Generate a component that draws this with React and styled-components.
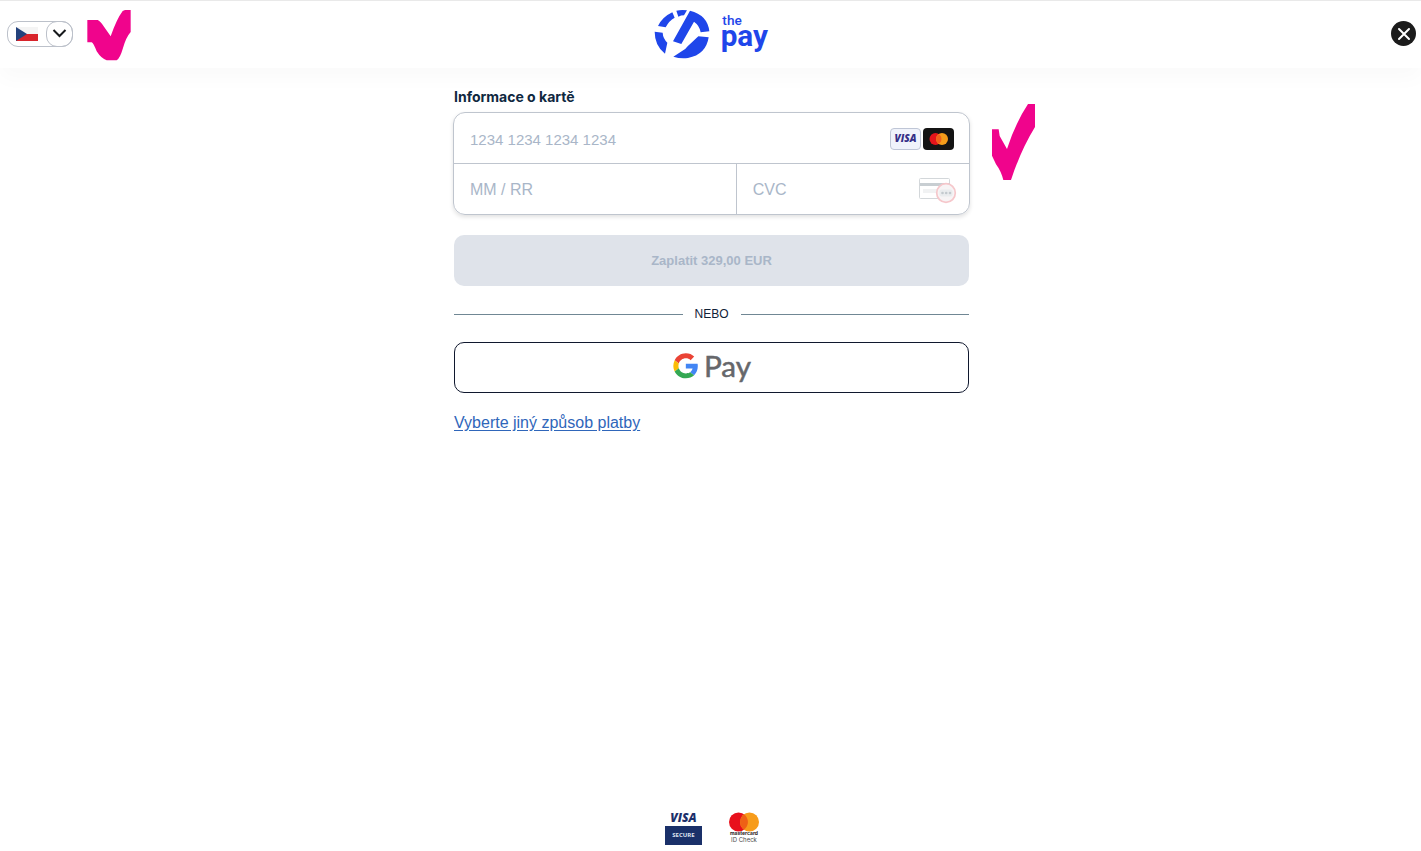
import React from "react";
import styled, { createGlobalStyle } from "styled-components";

const GlobalStyle = createGlobalStyle`
  *, *::before, *::after { box-sizing: border-box; }
  body {
    margin: 0;
    background: #ffffff;
    color: #0f2137;
    font-family: "Liberation Sans", Arial, sans-serif;
  }
  svg { display: block; flex: none; overflow: visible; }
`;

const Page = styled.div`
  min-height: 100vh;
  display: flex;
  flex-direction: column;
`;

const Header = styled.header`
  display: grid;
  grid-template-columns: 1fr auto 1fr;
  align-items: center;
  height: 68px;
  padding: 0 5px 2px 7px;
  border-top: 1px solid #e9e9e9;
  box-shadow: 0 10px 20px rgba(0, 0, 0, 0.025);
`;

const HeaderStart = styled.div`
  display: flex;
  align-items: center;
  gap: 14px;
`;

const LanguagePicker = styled.label`
  position: relative;
  display: flex;
  align-items: center;
  justify-content: space-between;
  width: 66px;
  height: 26px;
  padding-left: 8px;
  border: 1px solid #bcc1ca;
  border-radius: 11px;
`;

const ChevronBox = styled.span`
  display: flex;
  align-items: center;
  justify-content: center;
  width: 27px;
  height: 26px;
  margin: -1px;
  border: 1px solid #bcc1ca;
  border-radius: 11px;
`;

const LanguageSelect = styled.select`
  position: absolute;
  inset: 0;
  width: 100%;
  opacity: 0;
  cursor: pointer;
`;

const CloseButton = styled.button`
  justify-self: end;
  display: flex;
  align-items: center;
  justify-content: center;
  width: 25px;
  height: 25px;
  padding: 0;
  border: 0;
  border-radius: 50%;
  background: #1b1b1b;
  cursor: pointer;
`;

const Main = styled.main`
  flex: 1;
  display: flex;
  justify-content: center;
  padding: 19px 16px 20px 18px;
`;

const PaymentForm = styled.form`
  width: 100%;
  max-width: 515px;
`;

const FormLabel = styled.label`
  display: block;
  margin-bottom: 5px;
  font-family: Inter, sans-serif;
  font-size: 14px;
  font-weight: 700;
  line-height: 20px;
  color: #0f2840;
`;

const CardFields = styled.div`
  position: relative;
  margin: 0 -1px 20px;
  border: 1px solid #bfc5ce;
  border-radius: 12px;
  box-shadow: 0 2px 4px rgba(0, 0, 0, 0.12);
`;

const FieldRow = styled.div`
  display: flex;
  & + & { border-top: 1px solid #bfc5ce; }
`;

const Field = styled.div`
  flex: ${(p) => p.$share} 1 0;
  min-width: 0;
  display: flex;
  align-items: center;
  height: 50px;
  padding: 2px ${(p) => p.$end}px 0 16px;
  & + & { border-left: 1px solid #bfc5ce; }
`;

const FieldInput = styled.input`
  flex: 1;
  min-width: 0;
  height: 100%;
  padding: 0;
  border: 0;
  outline: 0;
  background: transparent;
  font-family: inherit;
  font-size: ${(p) => p.$size}px;
  color: #0f2137;
  &::placeholder { color: #a9b6c8; opacity: 1; }
`;

const Brands = styled.div`
  display: flex;
  gap: 2px;
`;

const CheckNote = styled.div`
  position: absolute;
  left: calc(100% + 23px);
  top: -9px;
`;

const ActionButton = styled.button`
  display: flex;
  align-items: center;
  justify-content: center;
  width: 100%;
  height: 51px;
  border-radius: 10px;
  font-family: inherit;
  font-size: 13px;
  font-weight: 700;
`;

const PayButton = styled(ActionButton)`
  border: 0;
  background: #dfe3ea;
  color: #a9b6c8;
`;

const GooglePayButton = styled(ActionButton)`
  border: 1px solid #10182e;
  background: #ffffff;
  cursor: pointer;
`;

const Divider = styled.div`
  display: flex;
  align-items: center;
  gap: 12px;
  margin: 20px 0;
  font-size: 12px;
  line-height: 16px;
  &::before, &::after {
    content: "";
    flex: 1;
    height: 1px;
    background: #708794;
  }
`;

const OtherMethodLink = styled.a`
  display: inline-block;
  margin-top: 20px;
  font-size: 16px;
  line-height: 20px;
  color: #2f66ba;
  text-decoration: underline;
  text-underline-offset: 2px;
`;

const Footer = styled.footer`
  display: flex;
  justify-content: center;
  gap: 27px;
  padding: 0 0 6px 3px;
`;

function FlagIcon() {
  return (
    <svg width="22" height="14" viewBox="0 0 22 14" aria-hidden="true">
      <path fill="#f4f4f4" d="M0 0h22v7H0z" />
      <path fill="#d8242b" d="M0 7h22v7H0z" />
      <path fill="#24427c" d="M0 0l11 7-11 7z" />
    </svg>
  );
}

function ThePayLogo() {
  return (
    <svg width="115" height="50" viewBox="42 27 345 150" role="img" aria-label="ThePay">
      <g fill="#1f46ea">
        <path d="M54 78Q67 51 97 37L104 53Q87 62 77 82Z" />
        <path d="M44 95L68 98Q69 115 82 128L75 161Q44 137 44 95Z" />
        <path d="M109 32Q125 28 141 31L132 46Q123 46 115 50Z" />
        <path d="M150 32Q203 45 208 94L182 97Q179 77 162 65L124 132L99 124Z" />
        <path d="M206 112Q198 164 144 174Q121 177 100 170L125 154Q137 148 143 139L175 109Z" />
      </g>
      <g fill="#1f46ea" fontFamily="Roboto, sans-serif">
        <text x="247" y="76" fontSize="41" fontWeight="500">the</text>
        <text x="242" y="139" fontSize="89" fontWeight="700">pay</text>
      </g>
    </svg>
  );
}

function SmallCheck() {
  return (
    <svg width="44" height="55" viewBox="261 19 132 165" aria-hidden="true">
      <path fill="#f0048c" d="M262 61H293Q300 63 311 80L332 110Q350 58 368 34L375 31H392V97Q378 113 369 145Q360 176 350 182H320Q304 177 290 155Q280 130 275 128H262Z" />
    </svg>
  );
}

function LargeCheck() {
  return (
    <svg width="44" height="76" viewBox="366 41 132 228" aria-hidden="true">
      <path fill="#f0048c" d="M366 117H386L389 137L411 176Q436 98 474 41H495V110Q452 180 423 269H400Q393 242 378 222L366 196Z" />
    </svg>
  );
}

function VisaBadge() {
  return (
    <svg width="31" height="22" viewBox="0 0 31 22" role="img" aria-label="Visa">
      <rect x="0.5" y="0.5" width="30" height="21" rx="3.5" fill="#f0f3fb" stroke="#bfc6d6" />
      <text x="15.5" y="14" textAnchor="middle" fontFamily="Open Sans, sans-serif" fontSize="10" fontStyle="italic" fontWeight="800" fill="#352f87">VISA</text>
    </svg>
  );
}

function MastercardBadge() {
  return (
    <svg width="31" height="22" viewBox="0 0 31 22" role="img" aria-label="Mastercard">
      <rect width="31" height="22" rx="4" fill="#141414" />
      <circle cx="12.5" cy="11" r="6" fill="#e5141b" />
      <circle cx="19" cy="11" r="6" fill="#f59c1a" />
      <path d="M15.75 6a6 6 0 0 1 0 10a6 6 0 0 1 0-10z" fill="#f1601c" />
    </svg>
  );
}

function CvcIcon() {
  return (
    <svg width="38" height="27" viewBox="0 0 38 27" aria-hidden="true">
      <rect x="0.5" y="1.5" width="30" height="20" rx="1" fill="#fff" stroke="#d3d7da" />
      <path fill="#c8ced2" d="M1 6h30v3H1z" />
      <path fill="#f1f2f3" d="M4 12h17v4H4z" />
      <circle cx="27" cy="16" r="9.3" fill="#f7f4f5" stroke="#f6c7cb" strokeWidth="1.7" />
      <rect x="20.5" y="12.5" width="13" height="7" rx="2" fill="#eaecee" />
      <g fill="#c3c9ce">
        <circle cx="23.5" cy="16" r="1.3" />
        <circle cx="27.2" cy="16" r="1.3" />
        <circle cx="31" cy="16" r="1.3" />
      </g>
    </svg>
  );
}

function GooglePayLogo() {
  return (
    <svg width="78" height="32" viewBox="98 366 234 96" role="img" aria-label="Google Pay">
      <svg x="99" y="369" width="75" height="77" viewBox="0 0 48 48">
        <path fill="#EA4335" d="M24 9.5c3.54 0 6.71 1.22 9.21 3.6l6.85-6.85C35.9 2.38 30.47 0 24 0 14.62 0 6.51 5.38 2.56 13.22l7.98 6.19C12.43 13.72 17.74 9.5 24 9.5z" />
        <path fill="#4285F4" d="M46.98 24.55c0-1.57-.15-3.09-.38-4.55H24v9.02h12.94c-.58 2.96-2.26 5.48-4.78 7.18l7.73 6c4.51-4.18 7.09-10.36 7.09-17.65z" />
        <path fill="#FBBC05" d="M10.53 28.59c-.48-1.45-.76-2.99-.76-4.59s.27-3.14.76-4.59l-7.98-6.19C.92 16.46 0 20.12 0 24c0 3.88.92 7.54 2.56 10.78l7.97-6.19z" />
        <path fill="#34A853" d="M24 48c6.48 0 11.93-2.13 15.89-5.81l-7.73-6c-2.15 1.45-4.92 2.3-8.16 2.3-6.26 0-11.57-4.22-13.47-9.91l-7.98 6.19C6.51 42.62 14.62 48 24 48z" />
      </svg>
      <text x="191" y="441" fontFamily="Lato, sans-serif" fontSize="89" fontWeight="400" fill="#66676b" stroke="#66676b" strokeWidth="1.5">Pay</text>
    </svg>
  );
}

function VisaSecureLogo() {
  return (
    <svg width="37" height="34" viewBox="0 0 37 34" role="img" aria-label="Visa Secure">
      <text x="18.5" y="11" textAnchor="middle" fontFamily="Open Sans, sans-serif" fontSize="12" fontStyle="italic" fontWeight="800" fill="#1c2f6b">VISA</text>
      <path fill="#1a3069" d="M0 15h37v19H0z" />
      <text x="18.5" y="26" textAnchor="middle" fontFamily="Open Sans, sans-serif" fontSize="6" fontWeight="700" fill="#dfe4f0">SECURE</text>
    </svg>
  );
}

function MastercardIdLogo() {
  return (
    <svg width="30" height="34" viewBox="0 0 30 34" role="img" aria-label="Mastercard ID Check">
      <circle cx="9.5" cy="11" r="9.5" fill="#e8101c" />
      <circle cx="20.5" cy="11" r="9.5" fill="#f79c1b" />
      <path d="M15 3.3a9.5 9.5 0 0 1 0 15.4a9.5 9.5 0 0 1 0-15.4z" fill="#ee6116" />
      <g fontFamily="Inter, sans-serif" textAnchor="middle">
        <text x="15" y="24" fontSize="5" fontWeight="700" fill="#2c2424">mastercard</text>
        <text x="15" y="31" fontSize="6" fill="#4c4c4c">ID Check</text>
      </g>
    </svg>
  );
}

export default function App() {
  return (
    <Page>
      <GlobalStyle />
      <Header>
        <HeaderStart>
          <LanguagePicker>
            <FlagIcon />
            <ChevronBox>
              <svg width="14" height="9" viewBox="0 0 14 9" aria-hidden="true">
                <path d="M0.5 1l6 6 6-6" fill="none" stroke="#17191c" strokeWidth="2" />
              </svg>
            </ChevronBox>
            <LanguageSelect aria-label="Jazyk" defaultValue="cs">
              <option value="cs">Čeština</option>
            </LanguageSelect>
          </LanguagePicker>
          <SmallCheck />
        </HeaderStart>
        <ThePayLogo />
        <CloseButton type="button" aria-label="Zavřít">
          <svg width="12" height="12" viewBox="0 0 12 12" aria-hidden="true">
            <path d="M1 1l10 10M11 1L1 11" stroke="#fff" strokeWidth="2" strokeLinecap="round" />
          </svg>
        </CloseButton>
      </Header>

      <Main>
        <PaymentForm onSubmit={(e) => e.preventDefault()}>
          <FormLabel htmlFor="card-number">Informace o kartě</FormLabel>
          <CardFields>
            <FieldRow>
              <Field $share={1} $end={15}>
                <FieldInput id="card-number" $size={15} placeholder="1234 1234 1234 1234" inputMode="numeric" />
                <Brands>
                  <VisaBadge />
                  <MastercardBadge />
                </Brands>
              </Field>
            </FieldRow>
            <FieldRow>
              <Field $share={11} $end={16}>
                <FieldInput $size={16} placeholder="MM / RR" aria-label="Platnost karty" inputMode="numeric" />
              </Field>
              <Field $share={9} $end={12}>
                <FieldInput $size={16} placeholder="CVC" aria-label="CVC" inputMode="numeric" />
                <CvcIcon />
              </Field>
            </FieldRow>
            <CheckNote>
              <LargeCheck />
            </CheckNote>
          </CardFields>

          <PayButton type="submit" disabled>Zaplatit 329,00 EUR</PayButton>
          <Divider>NEBO</Divider>
          <GooglePayButton type="button">
            <GooglePayLogo />
          </GooglePayButton>
          <OtherMethodLink href="#metody">Vyberte jiný způsob platby</OtherMethodLink>
        </PaymentForm>
      </Main>

      <Footer>
        <VisaSecureLogo />
        <MastercardIdLogo />
      </Footer>
    </Page>
  );
}
